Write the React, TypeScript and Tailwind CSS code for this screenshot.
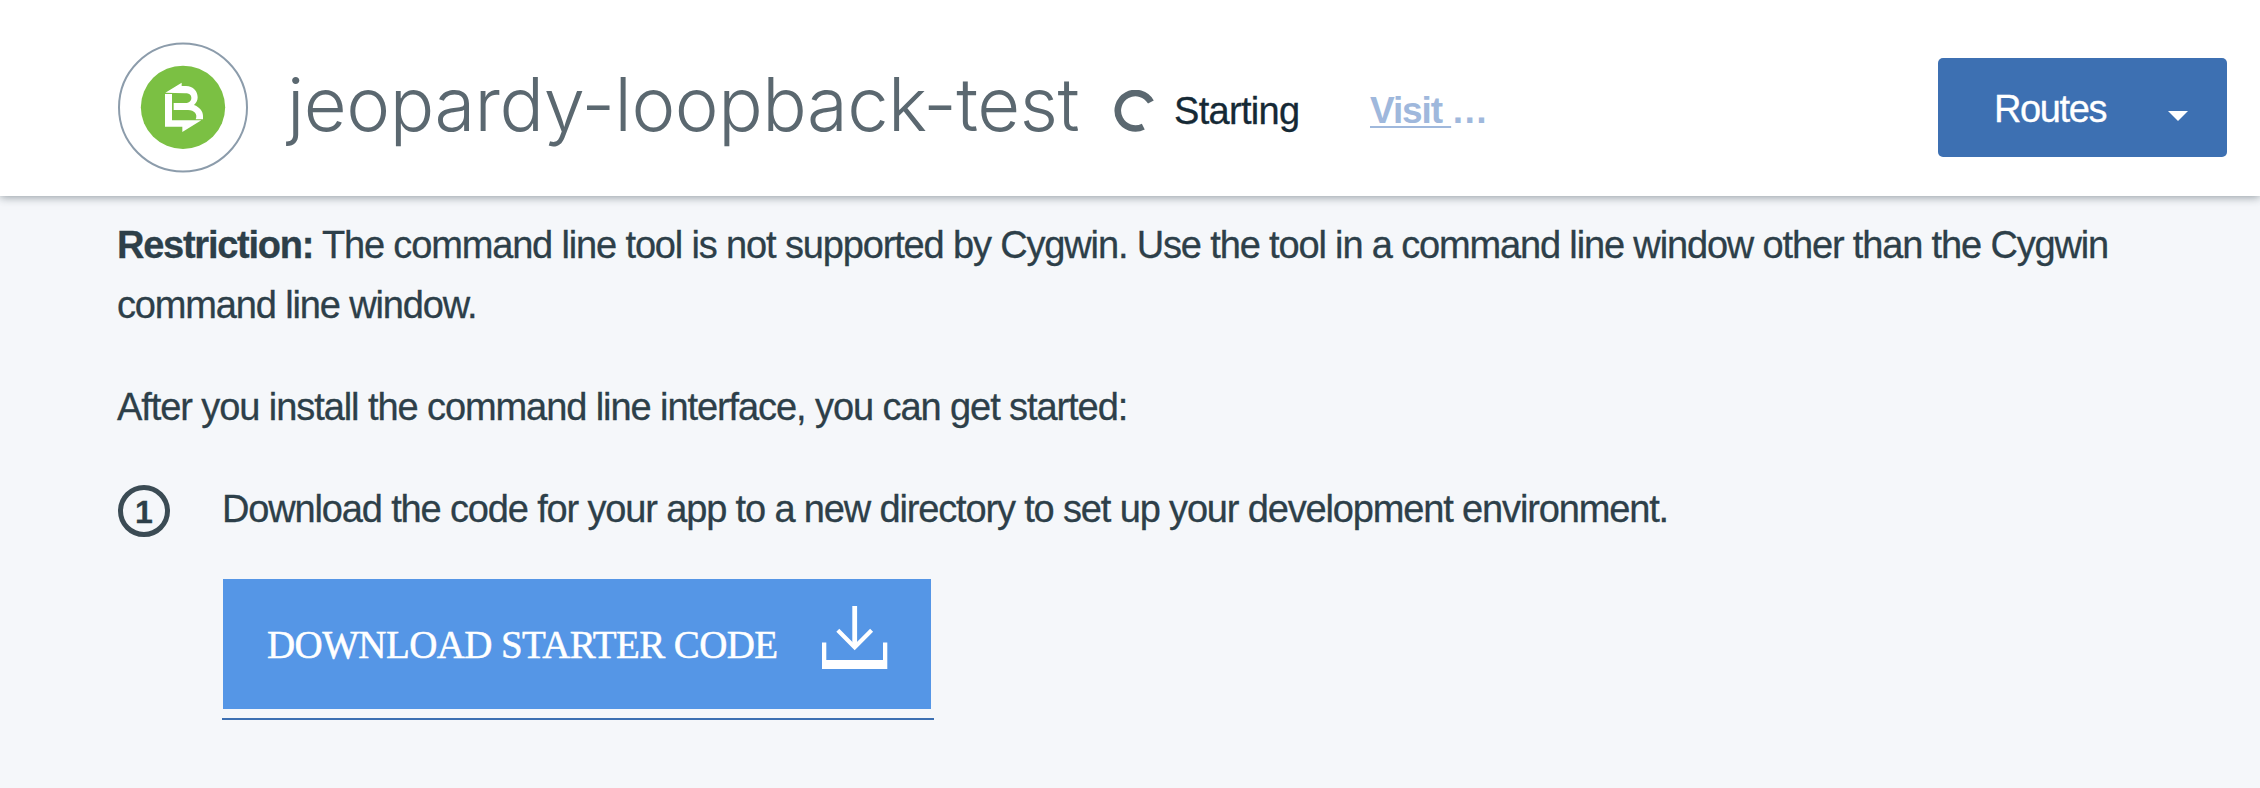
function AppLogo() {
  return (
    <svg className="h-[131px] w-[130px] shrink-0" viewBox="24 36 390 393" aria-hidden="true">
      <circle cx="219" cy="232.5" r="192" fill="#fff" stroke="#8c9cab" strokeWidth="6" />
      <ellipse cx="219" cy="232" rx="126.5" ry="125" fill="#7bc043" />
      <path
        fill="#fff"
        d="M166 188 L215 158 V168 H228 C250 168 263 184 263 202 C263 211 259 219 252 225 C269 231 279 244 279 258 V268 H257 C264 253 253 240 234 240 H191 V219 H226 C240 219 244 211 244 204 C244 196 239 190 225 190 Z"
      />
      <path fill="#fff" d="M165 192 H186 V271 H274 L217 306 V290 H165 Z" />
    </svg>
  );
}

function Spinner() {
  return (
    <svg className="mt-[6px] h-[42px] w-[42px] shrink-0" viewBox="0 0 42 42" fill="none" aria-hidden="true">
      <path d="M36.9 12 A17.7 17.7 0 1 0 29.3 36.6" stroke="#5b6870" strokeWidth="6.6" />
    </svg>
  );
}

function DownloadIcon() {
  return (
    <svg className="mb-[15px] h-[64px] w-[66px] shrink-0" viewBox="0 0 66 64" fill="none" stroke="#fff" aria-hidden="true">
      <path d="M32.7 1 V42" strokeWidth="4.8" />
      <path d="M15.8 25.3 L32.7 42.2 L49.6 25.3" strokeWidth="4.2" />
      <path d="M0 37.5 H4.3 V55 H61 V37.5 H65.3 V64 H0 Z" fill="#fff" stroke="none" />
    </svg>
  );
}

function Header() {
  return (
    <header className="relative flex h-[196px] items-center bg-white pt-[19px] pr-[33px] pl-[118px] shadow-[0_1px_9px_rgba(40,55,65,0.5)]">
      <AppLogo />
      <h1 className="mb-[8px] ml-[39px] w-[827px] font-[Inter] text-[74px] leading-[90px] font-light tracking-[-0.48px] whitespace-nowrap text-[#5b6870]">
        jeopardy-loopback-test
      </h1>
      <Spinner />
      <span className="mt-[7px] ml-[18px] w-[196px] text-[38px] leading-[44px] tracking-[-0.7px] text-[#152935] [-webkit-text-stroke:0.3px]">
        Starting
      </span>
      <a className="mt-[7px] text-[37px] leading-[44px] font-bold whitespace-pre text-[#9fb8dc]">
        <span className="tracking-[-1.1px] underline decoration-2 underline-offset-[3px]">{"Visit "}</span>…
      </a>
      <button className="ml-auto flex h-[99px] w-[289px] items-center rounded-[5px] bg-[#3d70b2] pr-[39px] pl-[56px] text-[38px] tracking-[-1.4px] text-white [-webkit-text-stroke:0.3px]">
        <span className="mt-[3px]">Routes</span>
        <svg className="mt-[16px] ml-auto h-[10px] w-[20px]" viewBox="0 0 20 10" aria-hidden="true">
          <path d="M0 0 H20 L10 10 Z" fill="#fff" />
        </svg>
      </button>
    </header>
  );
}

function Step() {
  return (
    <div className="mt-[42px] flex items-start pl-px">
      <div className="mt-[6px] flex h-[52px] w-[52px] shrink-0 items-center justify-center rounded-full border-[5px] border-[#3b4b54] pt-[2px] text-[32px] leading-none font-bold tracking-normal">
        1
      </div>
      <div className="ml-[52px]">
        <p>Download the code for your app to a new directory to set up your development environment.</p>
        <div className="mt-[40px] w-[712px] border-b-2 border-[#3d70b2] pb-[9px] pl-px">
          <button className="flex h-[130px] w-[708px] items-center justify-between bg-[#5596e6] pr-[43px] pl-[44px] font-['Liberation_Serif'] text-[39px] tracking-[-0.6px] text-white [-webkit-text-stroke:0.5px]">
            <span className="mt-[2px] whitespace-nowrap">DOWNLOAD STARTER CODE</span>
            <DownloadIcon />
          </button>
        </div>
      </div>
    </div>
  );
}

export default function App() {
  return (
    <div className="flex h-[788px] w-[2260px] flex-col overflow-hidden bg-[#f5f7fa] font-['Liberation_Sans'] text-[#2d3f49]">
      <Header />
      <main className="px-[117px] pt-[19px] text-[38px] leading-[60px] tracking-[-1.15px] [-webkit-text-stroke:0.3px]">
        <p>
          <strong className="tracking-[-1.25px]">Restriction:</strong>{" "}
          <span>
            The command line tool is not supported by Cygwin. Use the tool in a command line window other than the
            Cygwin
          </span>
          <br />
          <span>command line window.</span>
        </p>
        <p className="mt-[42px] tracking-[-1.08px]">
          After you install the command line interface, you can get started:
        </p>
        <Step />
      </main>
    </div>
  );
}
